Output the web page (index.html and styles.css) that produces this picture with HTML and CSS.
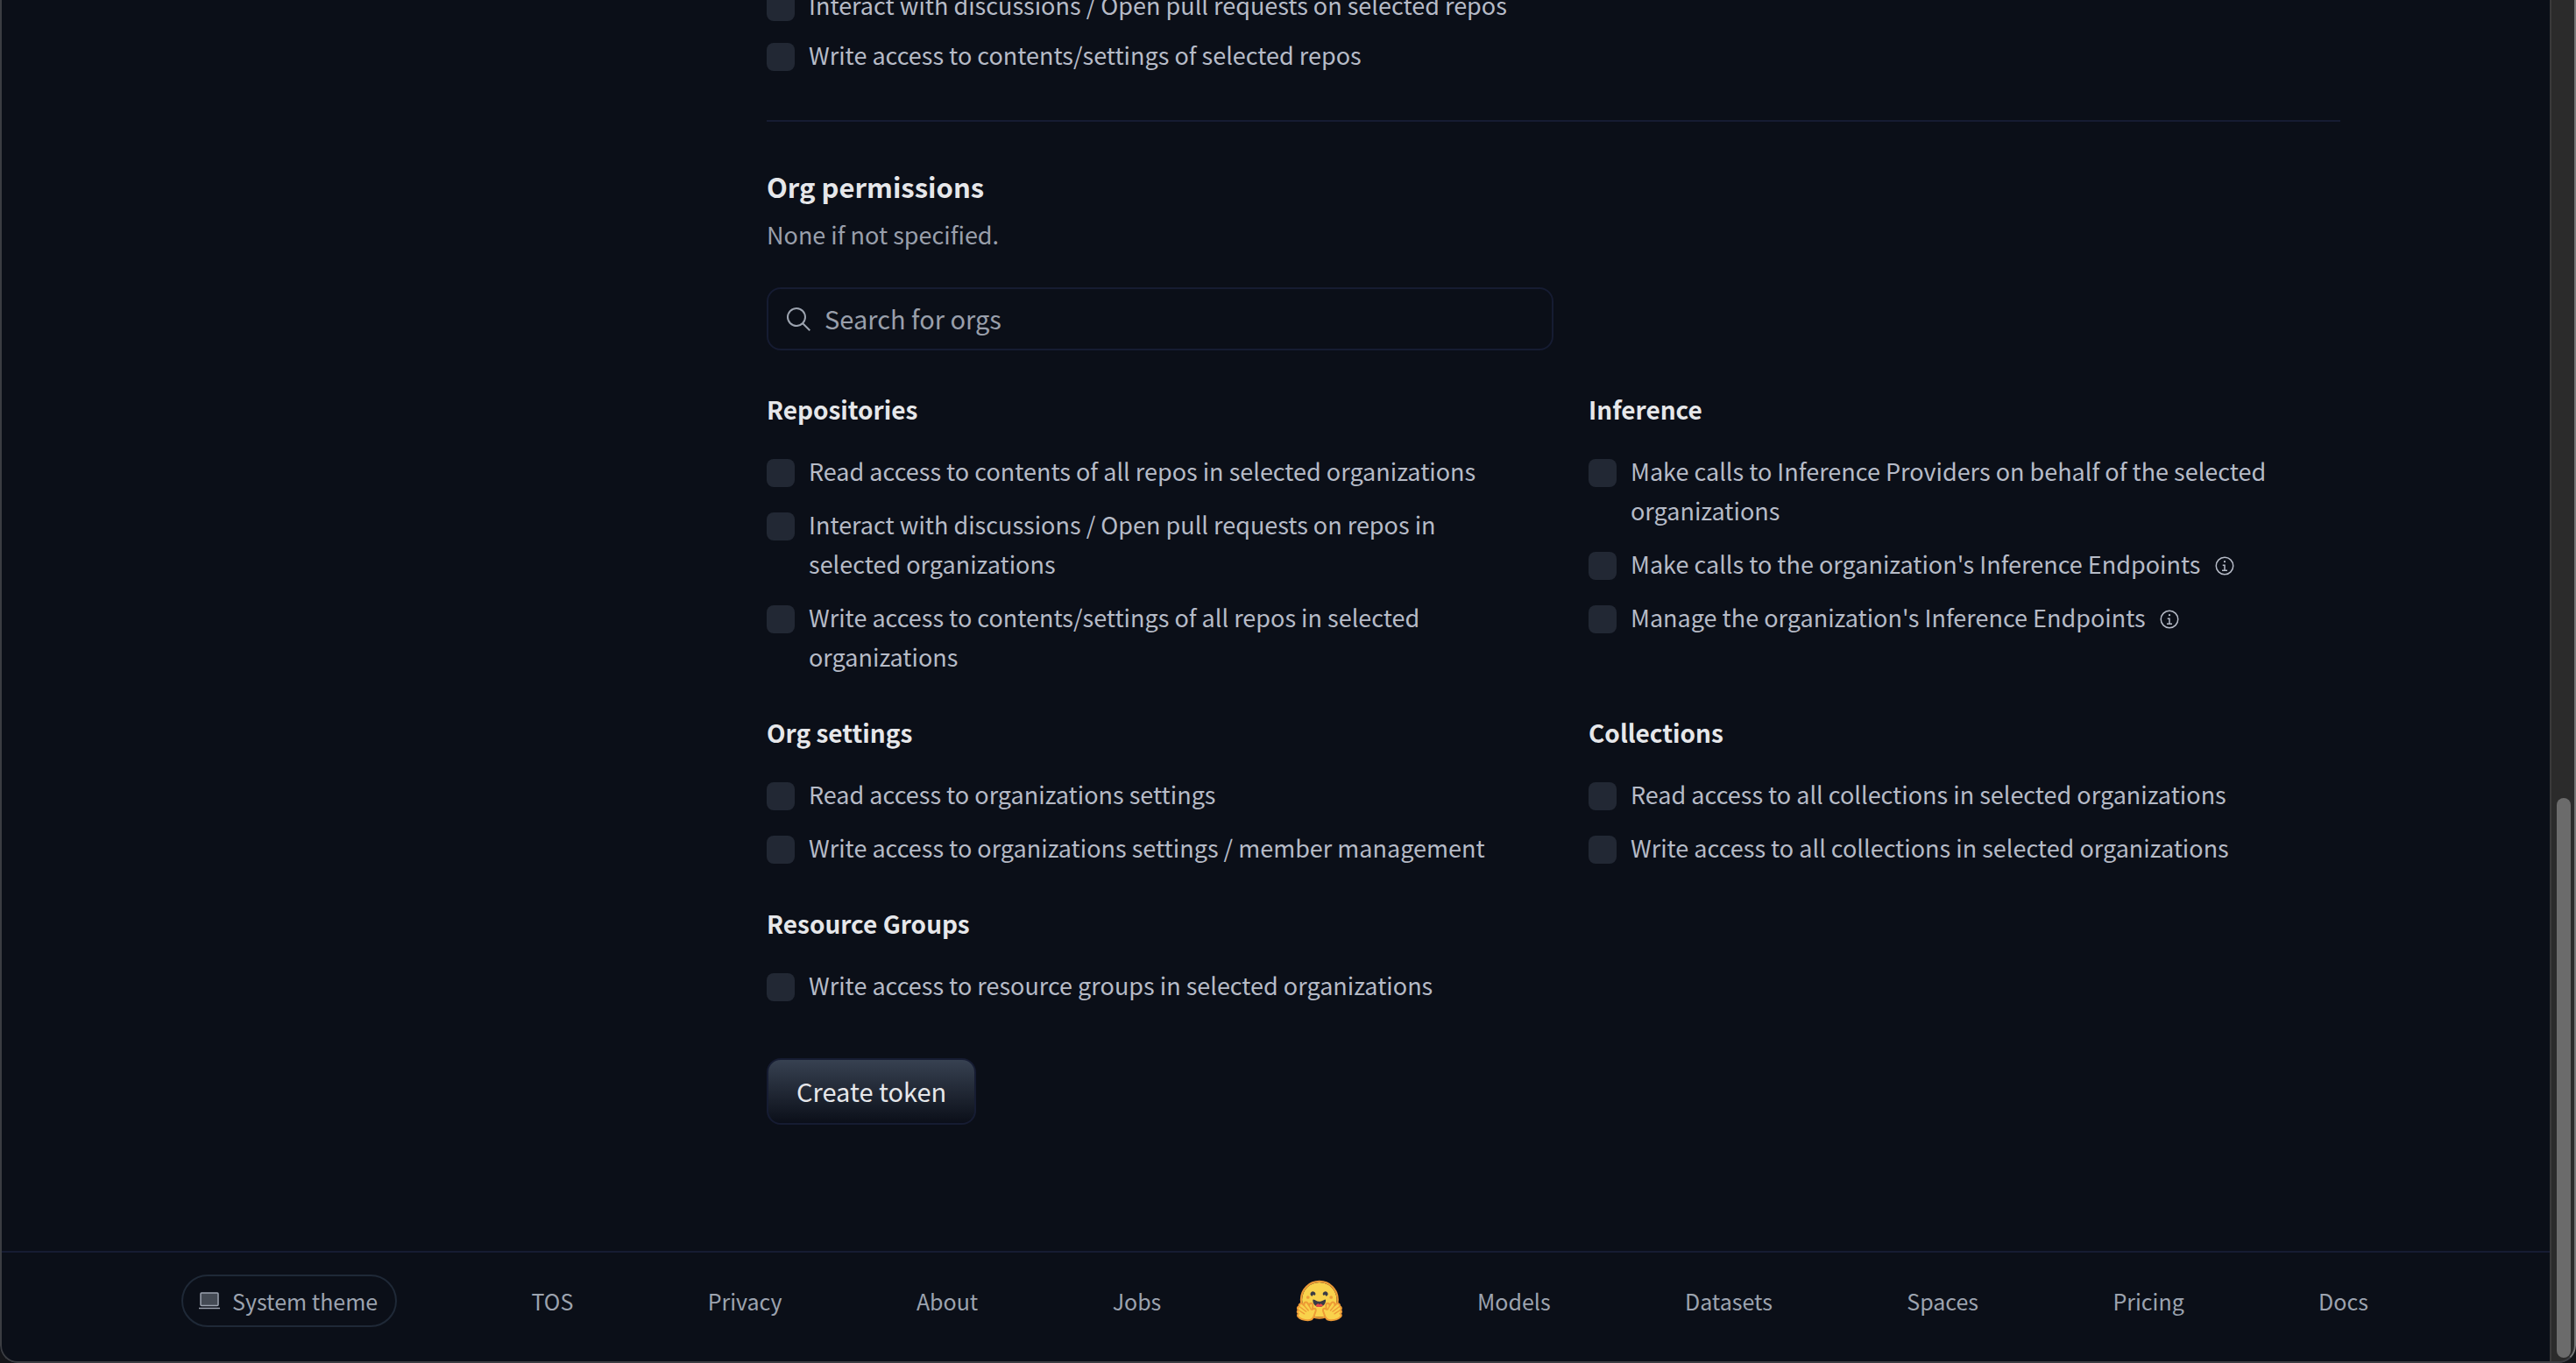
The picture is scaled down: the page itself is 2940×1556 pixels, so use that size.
FILE: index.html
```html
<!DOCTYPE html>
<html lang="en">
<head>
<meta charset="utf-8">
<title>Create new token</title>
<link rel="stylesheet" href="styles.css">
</head>
<body>
<div class="window">
  <div class="page">
    <div class="container layout">
      <main class="content">
        <ul class="options options-compact">
          <li><label class="option"><input type="checkbox"><span>Interact with discussions / Open pull requests on selected repos</span></label></li>
          <li><label class="option"><input type="checkbox"><span>Write access to contents/settings of selected repos</span></label></li>
        </ul>
        <hr class="divider">
        <h2 class="title">Org permissions</h2>
        <p class="hint">None if not specified.</p>
        <div class="search">
          <svg class="search-icon" viewBox="0 0 32 32" aria-hidden="true"><path fill="currentColor" d="M30 28.59L22.45 21A11 11 0 1 0 21 22.45L28.59 30zM5 14a9 9 0 1 1 9 9a9 9 0 0 1-9-9z"/></svg>
          <input type="text" class="search-input" placeholder="Search for orgs" aria-label="Search for orgs">
        </div>
        <div class="groups">
          <section>
            <h3 class="group-title">Repositories</h3>
            <ul class="options">
              <li><label class="option"><input type="checkbox"><span>Read access to contents of all repos in selected organizations</span></label></li>
              <li><label class="option"><input type="checkbox"><span>Interact with discussions / Open pull requests on repos in selected organizations</span></label></li>
              <li><label class="option"><input type="checkbox"><span>Write access to contents/settings of all repos in selected organizations</span></label></li>
            </ul>
          </section>
          <section>
            <h3 class="group-title">Inference</h3>
            <ul class="options">
              <li><label class="option"><input type="checkbox"><span>Make calls to Inference Providers on behalf of the selected organizations</span></label></li>
              <li><label class="option"><input type="checkbox"><span>Make calls to the organization's Inference Endpoints <svg class="info" viewBox="0 0 32 32" aria-hidden="true"><path fill="currentColor" d="M17 22v-8h-4v2h2v6h-3v2h8v-2h-3z"/><path fill="currentColor" d="M16 8a1.5 1.5 0 1 0 1.5 1.5A1.5 1.5 0 0 0 16 8z"/><path fill="currentColor" d="M16 30a14 14 0 1 1 14-14a14 14 0 0 1-14 14zm0-26a12 12 0 1 0 12 12A12 12 0 0 0 16 4z"/></svg></span></label></li>
              <li><label class="option"><input type="checkbox"><span>Manage the organization's Inference Endpoints <svg class="info" viewBox="0 0 32 32" aria-hidden="true"><path fill="currentColor" d="M17 22v-8h-4v2h2v6h-3v2h8v-2h-3z"/><path fill="currentColor" d="M16 8a1.5 1.5 0 1 0 1.5 1.5A1.5 1.5 0 0 0 16 8z"/><path fill="currentColor" d="M16 30a14 14 0 1 1 14-14a14 14 0 0 1-14 14zm0-26a12 12 0 1 0 12 12A12 12 0 0 0 16 4z"/></svg></span></label></li>
            </ul>
          </section>
          <section>
            <h3 class="group-title">Org settings</h3>
            <ul class="options">
              <li><label class="option"><input type="checkbox"><span>Read access to organizations settings</span></label></li>
              <li><label class="option"><input type="checkbox"><span>Write access to organizations settings / member management</span></label></li>
            </ul>
          </section>
          <section>
            <h3 class="group-title">Collections</h3>
            <ul class="options">
              <li><label class="option"><input type="checkbox"><span>Read access to all collections in selected organizations</span></label></li>
              <li><label class="option"><input type="checkbox"><span>Write access to all collections in selected organizations</span></label></li>
            </ul>
          </section>
          <section>
            <h3 class="group-title">Resource Groups</h3>
            <ul class="options">
              <li><label class="option"><input type="checkbox"><span>Write access to resource groups in selected organizations</span></label></li>
            </ul>
          </section>
        </div>
        <button type="submit" class="submit">Create token</button>
      </main>
    </div>
    <footer class="footer">
      <nav class="container footer-nav" aria-label="Footer">
        <button type="button" class="theme">
          <svg class="theme-icon" viewBox="0 0 24 24" aria-hidden="true"><rect x="2" y="3" width="20" height="14.500" rx="1" fill="currentColor" fill-opacity=".4" stroke="currentColor" stroke-width="1.500"/><path d="M0 20.500h24" stroke="currentColor" stroke-width="1.500"/></svg>
          System theme
        </button>
        <a href="#">TOS</a>
        <a href="#">Privacy</a>
        <a href="#">About</a>
        <a href="#">Jobs</a>
        <a href="#" class="logo" aria-label="Home">
          <svg viewBox="0 3 95 82" aria-hidden="true">
            <path fill="#F9D24C" d="M47.210 76.500a34.750 34.750 0 1 0 0-69.500 34.750 34.750 0 0 0 0 69.500Z"/>
            <path fill="#EE9B36" d="M81.960 41.750a34.750 34.750 0 1 0-69.500 0 34.750 34.750 0 0 0 69.500 0Zm-73.500 0a38.750 38.750 0 1 1 77.500 0 38.750 38.750 0 0 1-77.500 0Z"/>
            <path fill="#3A3B45" d="M58.500 32.300c1.280.44 1.780 3.060 3.070 2.380a5 5 0 1 0-6.760-2.070c.61 1.150 2.550-.72 3.700-.32ZM34.950 32.300c-1.280.44-1.790 3.060-3.070 2.380a5 5 0 1 1 6.760-2.070c-.61 1.150-2.560-.72-3.700-.32Z"/>
            <path fill="#3A3B45" d="M46.960 56.290c9.830 0 13-8.760 13-13.260 0-2.340-1.570-1.600-4.090-.36-2.330 1.150-5.460 2.740-8.900 2.740-7.190 0-13-6.880-13-2.380s3.160 13.260 13 13.260Z"/>
            <path fill="#E84A4A" d="M39.400 54c2-3 4.500-4.600 6-4.200.7.500 1.200 2 1.800 2s1.200-1.500 2-2c2 0 4.500 1.800 5.600 4-4.200 3.200-11.400 3.200-15.400.2Z"/>
            <circle cx="70.700" cy="37" r="3.250" fill="#EE9B36"/><circle cx="24.210" cy="37" r="3.250" fill="#EE9B36"/>
            <g id="hand">
              <path fill="#F9D24C" stroke="#EE9B36" stroke-width="3.500" stroke-linejoin="round" d="M24 83c-8 0-16-3-19.500-7-2.500-3 0-5.500 1-6-3-2-3.500-5-.5-7.500-3-3-2-6.500 1.500-7.500-1-5 4-7 7-4.500l3 2.500c-1-6 4.500-8.500 7.500-3.500l2.500 4c1.500-6 7.500-6 7.500 0 0 3-1 6-1 8 2-2.500 6-3.500 7 0 .8 3-2 7-3 11-1.500 6-5 10.500-13 10.500Z"/>
              <path fill="none" stroke="#EE9B36" stroke-width="2.500" stroke-linecap="round" d="M5 62.500l12 7.500M6.500 55l14 10.500M16 53l9 10.500M26.500 53.500l4 8"/>
            </g>
            <use href="#hand" transform="matrix(-1 0 0 1 94.500 0)"/>
          </svg>
        </a>
        <a href="#">Models</a>
        <a href="#">Datasets</a>
        <a href="#">Spaces</a>
        <a href="#">Pricing</a>
        <a href="#">Docs</a>
      </nav>
    </footer>
  </div>
  <div class="scrollbar"><div class="thumb"></div></div>
</div>
</body>
</html>
```
FILE: styles.css
```css
* {
  box-sizing: border-box;
}

body {
  margin: 0;
  background: #141519;
  color: #b6bbc7;
  font-family: "Noto Sans CJK JP", "Noto Sans", sans-serif;
  font-size: 27px;
  line-height: 45px;
}

h2, h3, p, ul {
  margin: 0;
  padding: 0;
}

ul {
  list-style: none;
}

.window {
  position: relative;
  display: flex;
  height: 100vh;
  overflow: hidden;
  border-radius: 0 0 20px 20px;
  background: #0b0f18;
}

/* Window frame, drawn over the page and its scrollbar */
.window::after {
  content: "";
  position: absolute;
  inset: 0;
  border: 2px solid #3b3d42;
  border-top: 0;
  border-right-color: #777;
  border-radius: inherit;
  pointer-events: none;
}

/* The page rests at the end of its scroll range */
.page {
  flex: 1;
  display: flex;
  flex-direction: column;
  justify-content: flex-end;
}

.container {
  width: 100%;
  max-width: 2560px;
  margin: 0 auto;
  padding: 0 32px;
}

.layout {
  display: grid;
  grid-template-columns: 25fr 75fr;
}

.content {
  grid-column: 2;
  padding: 0 32px 144px 44px;
}

.options {
  display: grid;
  gap: 16px;
}

.options-compact {
  gap: 12px;
}

.option {
  display: flex;
  align-items: flex-start;
  gap: 16px;
}

.option input {
  appearance: none;
  flex: none;
  width: 32px;
  height: 32px;
  margin: 9px 0 0;
  border-radius: 8px;
  background: #222834;
}

.info {
  width: 24px;
  height: 24px;
  margin-left: 9px;
  vertical-align: -3px;
}

.divider {
  height: 2px;
  margin: 52px 0 46px;
  border: 0;
  background: #161c32;
}

.title {
  color: #e6e7ea;
  font-size: 31px;
  line-height: 56px;
}

.hint {
  margin-top: 4px;
  color: #999fab;
}

.search {
  position: relative;
  width: 50%;
  margin: 38px 0 43px;
}

.search-icon {
  position: absolute;
  left: 20px;
  top: 20px;
  width: 32px;
  height: 32px;
  color: #9ca3af;
}

.search-input {
  display: block;
  width: 100%;
  height: 72px;
  padding: 0 24px 2px 64px;
  border: 2px solid #161c32;
  border-radius: 16px;
  background: transparent;
  color: #e5e7eb;
  font: inherit;
  font-size: 29px;
}

.search-input::placeholder {
  color: #999fab;
  opacity: 1;
}

.groups {
  display: grid;
  grid-template-columns: 1fr 1fr;
  gap: 40px 80px;
}

.group-title {
  margin-bottom: 24px;
  color: #e6e7ea;
  font-size: 28px;
  line-height: 48px;
}

.submit {
  display: block;
  height: 76px;
  margin-top: 61px;
  padding: 0 32px 2px;
  border: 2px solid #161c32;
  border-radius: 16px;
  background: linear-gradient(#374151, #0b0f19);
  color: #e6e7ea;
  font: inherit;
  font-size: 29px;
}

.footer {
  border-top: 2px solid #161c32;
}

.footer-nav {
  display: flex;
  align-items: center;
  justify-content: space-between;
  height: 126px;
  padding-bottom: 16px;
}

.footer-nav a,
.theme {
  color: #9ca3af;
  font-size: 25px;
  text-decoration: none;
}

.theme {
  display: flex;
  align-items: center;
  gap: 14px;
  height: 60px;
  padding: 0 20px 0 18px;
  border: 2px solid #1f2937;
  border-radius: 30px;
  background: transparent;
  font-family: inherit;
}

.theme-icon {
  width: 24px;
  height: 24px;
}

.logo svg {
  display: block;
  width: 54px;
  height: 48px;
}

.scrollbar {
  display: flex;
  flex-direction: column;
  justify-content: flex-end;
  width: 30px;
  padding: 0 6px 6px;
  border-left: 2px solid #3a3a3a;
  background: #2b2b2b;
}

.thumb {
  height: 41.25%;
  border-radius: 8px;
  background: #6b6b6b;
}
```
